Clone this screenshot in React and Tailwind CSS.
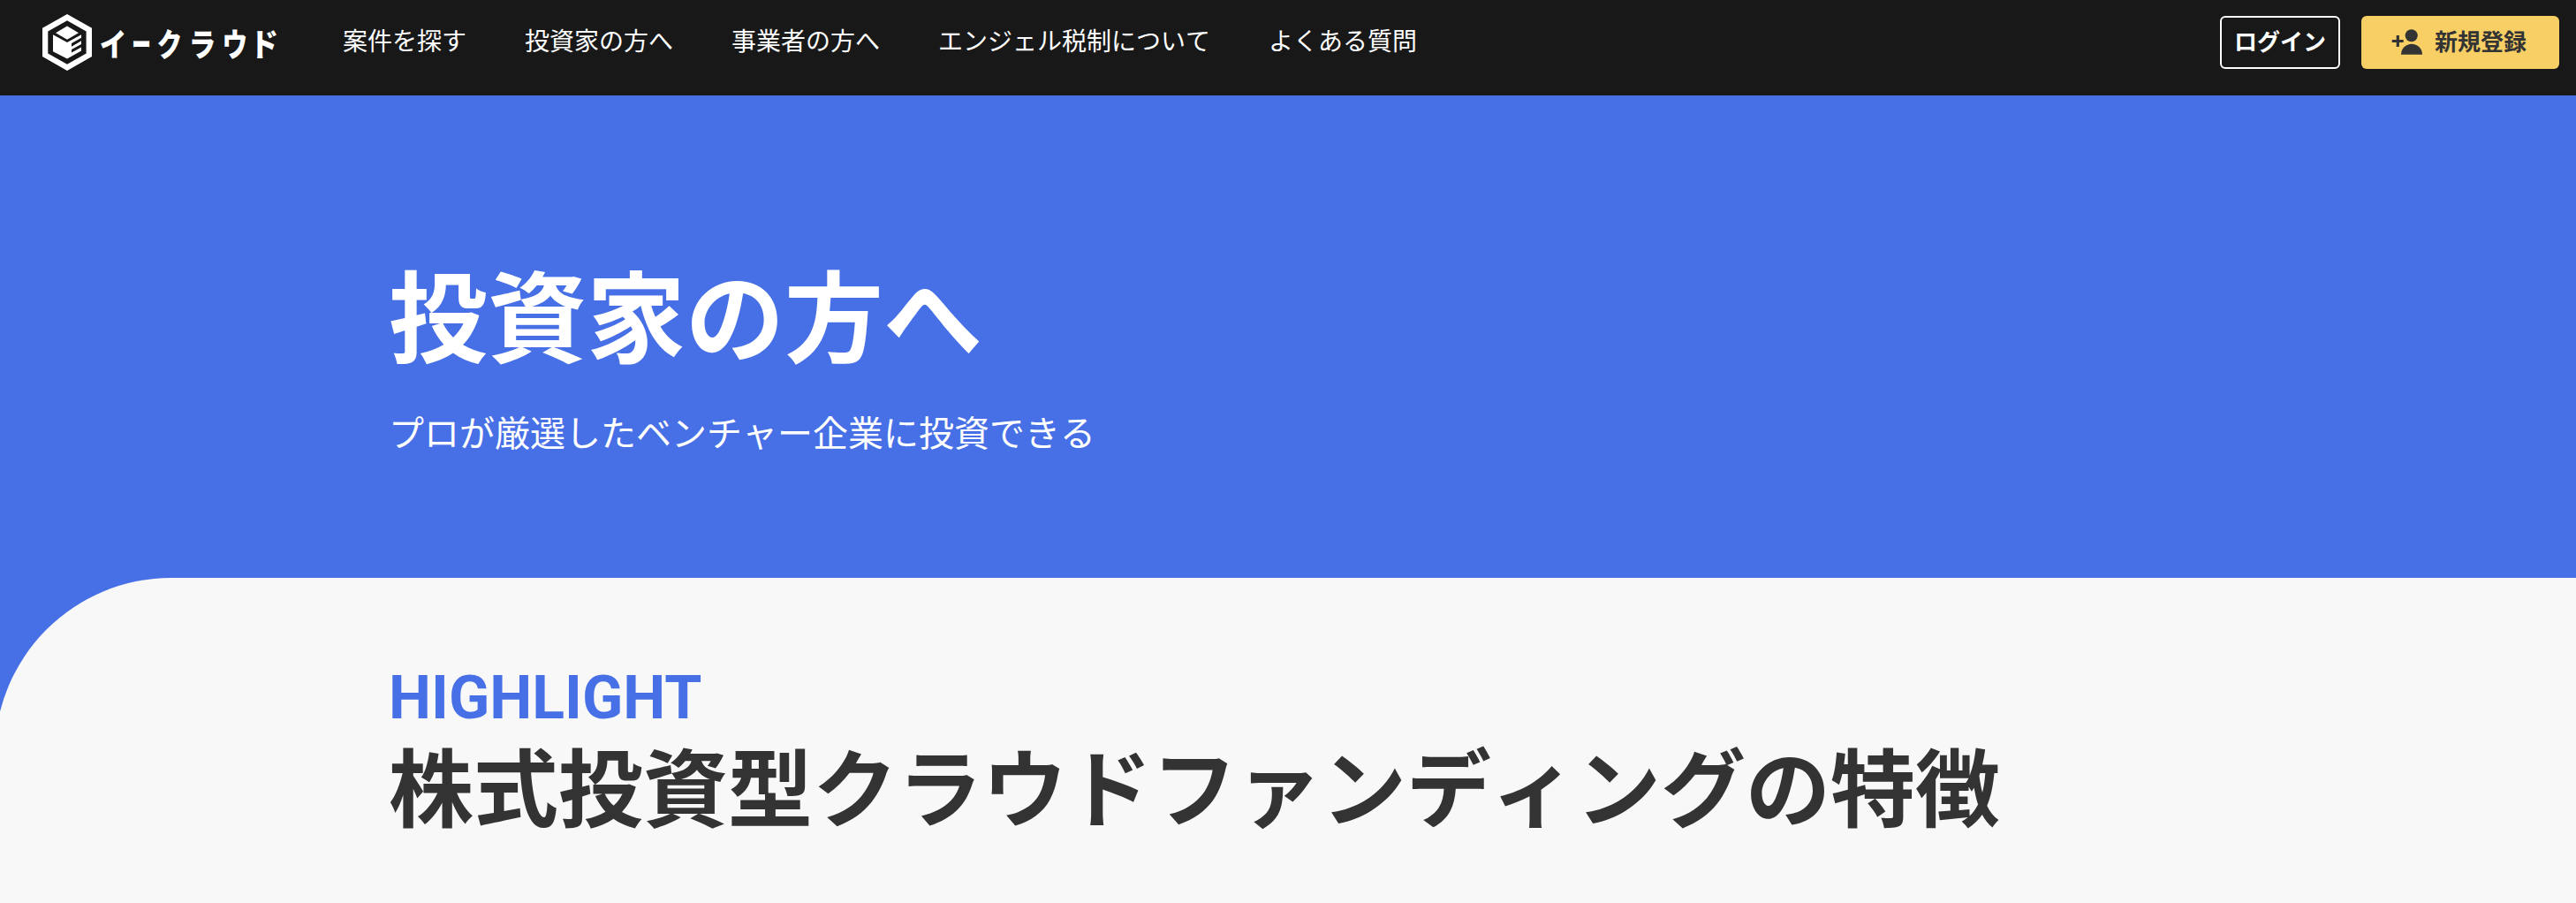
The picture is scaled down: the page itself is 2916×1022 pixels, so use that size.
const navItems = [
  { path: '#projects', label: '案件を探す' },
  { path: '#investor', label: '投資家の方へ' },
  { path: '#business', label: '事業者の方へ' },
  { path: '#angel', label: 'エンジェル税制について' },
  { path: '#faq', label: 'よくある質問' },
]

const LogoMark = () => (
  <svg width="56" height="64" viewBox="0 0 56 64" fill="#fff">
    <path fillRule="evenodd" d="M28 0 56 15.7V48L28 64 0 48V15.7ZM28 7.3 6.3 19.6V44.4L28 56.7 49.6 44.4V19.6Z" />
    <path d="M28 13.6 41 21.3 28 28.7 15 21.3Z" />
    <path d="M12 23.3 28 32 44 23.3V26.8L33 33V36.7L44 30.3V34L33 40V43.6L44 37.6V41.6L28 50.4 12 42.2Z" />
  </svg>
)

const PersonAddIcon = () => (
  <svg width="36" height="30" viewBox="0 0 36 30" fill="#333">
    <path d="M5.7 7h3.2v4.9h4.8v3.2H8.9V20H5.7v-4.9H.7v-3.2h5z" />
    <circle cx="22.7" cy="7.3" r="7" />
    <path d="M11 28.7a12 12 0 0 1 24 0z" />
  </svg>
)

const Header = () => (
  <header className="flex h-[108px] items-start bg-[#181818] pt-4 pr-[19px] pl-12 text-white">
    <a href="#top" className="flex items-center">
      <LogoMark />
      <span className="ml-2 flex text-[36px] leading-none font-black">
        <span className="flex w-8 scale-x-85 justify-center">イ</span>
        <span className="flex w-8 scale-x-60 justify-center">ー</span>
        <span className="flex w-8 scale-x-80 justify-center">ク</span>
        <span className="ml-[5px] flex w-8 scale-x-85 justify-center">ラ</span>
        <span className="ml-[5px] flex w-8 scale-x-80 justify-center">ウ</span>
        <span className="ml-px flex w-8 scale-x-90 justify-center">ド</span>
      </span>
    </a>

    <nav className="ml-[73px] flex h-16 items-center gap-[66px] pb-1.5 text-[28px] leading-none">
      {navItems.map((item) => (
        <a key={item.path} href={item.path}>{item.label}</a>
      ))}
    </nav>

    <div className="mt-0.5 ml-auto flex gap-6 text-[26px] leading-none font-bold">
      <a href="#login" className="flex h-[60px] w-[136px] items-center justify-center rounded-md border-2 border-white pb-1">
        ログイン
      </a>
      <a href="#register" className="flex h-[60px] w-56 items-center rounded-md bg-[#f8cf65] pl-[34px] text-[#333]">
        <PersonAddIcon />
        <span className="ml-[13px] pb-1">新規登録</span>
      </a>
    </div>
  </header>
)

const Hero = () => (
  <section className="h-[546px] pt-[185px] pl-[440px] text-white">
    <h1 className="text-[112px] leading-[120px] font-bold">投資家の方へ</h1>
    <p className="mt-[45px] text-[40px] leading-[60px]">プロが厳選したベンチャー企業に投資できる</p>
  </section>
)

const Highlight = () => (
  <section className="-ml-1.5 h-[368px] rounded-tl-[200px] bg-[#f8f8f8] pt-[101px] pl-[446px]">
    <p className="font-['Roboto'] text-[68px] leading-[70px] font-bold text-[#4770e6] [font-kerning:normal]">
      HIGHLIGHT
    </p>
    <h2 className="text-[96px] leading-[123px] font-bold text-[#333]">
      株式投資型クラウドファンディングの特徴
    </h2>
  </section>
)

const App = () => (
  <div
    className="h-[1022px] overflow-hidden bg-[#4770e6] font-['Noto_Sans_CJK_JP',sans-serif] [font-kerning:none]"
    lang="ja"
  >
    <Header />
    <Hero />
    <Highlight />
  </div>
)

export default App
